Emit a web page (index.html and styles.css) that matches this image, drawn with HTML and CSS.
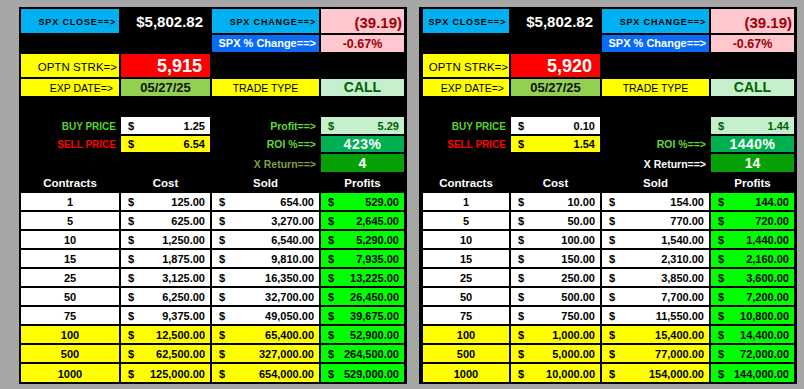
FILE: index.html
```html
<!DOCTYPE html>
<html>
<head>
<meta charset="utf-8">
<link rel="stylesheet" href="styles.css">
</head>
<body>
<div class="page">
  <section class="sheet sheet-a">
    <div class="c lab-cyan">SPX CLOSE==&gt;</div>
    <div class="c close">$5,802.82</div>
    <div class="c lab-cyan">SPX CHANGE==&gt;</div>
    <div class="c pink chg">(39.19)</div>

    <div class="c"></div>
    <div class="c"></div>
    <div class="c lab-blue">SPX % Change==&gt;</div>
    <div class="c pink pct">-0.67%</div>

    <div class="c lab-yellow strk-lab">OPTN STRK=&gt;</div>
    <div class="c strike">5,915</div>
    <div class="c"></div>
    <div class="c"></div>

    <div class="c lab-yellow exp-lab">EXP DATE=&gt;</div>
    <div class="c date">05/27/25</div>
    <div class="c lab-yellow trade">TRADE TYPE</div>
    <div class="c call">CALL</div>

    <div class="c"></div><div class="c"></div><div class="c"></div><div class="c"></div>

    <div class="c txt buy">BUY PRICE</div>
    <div class="c money white"><span>$</span><span>1.25</span></div>
    <div class="c txt gr">Profit==&gt;</div>
    <div class="c money lgreen"><span>$</span><span>5.29</span></div>

    <div class="c txt sell">SELL PRICE</div>
    <div class="c money yellow"><span>$</span><span>6.54</span></div>
    <div class="c txt gr">ROI %==&gt;</div>
    <div class="c roi">423%</div>

    <div class="c"></div>
    <div class="c"></div>
    <div class="c txt olive">X Return==&gt;</div>
    <div class="c xret">4</div>

    <div class="c head">Contracts</div>
    <div class="c head">Cost</div>
    <div class="c head">Sold</div>
    <div class="c head">Profits</div>

    <div class="c qty white">1</div><div class="c money white"><span>$</span><span>125.00</span></div><div class="c money white"><span>$</span><span>654.00</span></div><div class="c money prof"><span>$</span><span>529.00</span></div>
    <div class="c qty white">5</div><div class="c money white"><span>$</span><span>625.00</span></div><div class="c money white"><span>$</span><span>3,270.00</span></div><div class="c money prof"><span>$</span><span>2,645.00</span></div>
    <div class="c qty white">10</div><div class="c money white"><span>$</span><span>1,250.00</span></div><div class="c money white"><span>$</span><span>6,540.00</span></div><div class="c money prof"><span>$</span><span>5,290.00</span></div>
    <div class="c qty white">15</div><div class="c money white"><span>$</span><span>1,875.00</span></div><div class="c money white"><span>$</span><span>9,810.00</span></div><div class="c money prof"><span>$</span><span>7,935.00</span></div>
    <div class="c qty white">25</div><div class="c money white"><span>$</span><span>3,125.00</span></div><div class="c money white"><span>$</span><span>16,350.00</span></div><div class="c money prof"><span>$</span><span>13,225.00</span></div>
    <div class="c qty white">50</div><div class="c money white"><span>$</span><span>6,250.00</span></div><div class="c money white"><span>$</span><span>32,700.00</span></div><div class="c money prof"><span>$</span><span>26,450.00</span></div>
    <div class="c qty white">75</div><div class="c money white"><span>$</span><span>9,375.00</span></div><div class="c money white"><span>$</span><span>49,050.00</span></div><div class="c money prof"><span>$</span><span>39,675.00</span></div>
    <div class="c qty yellow">100</div><div class="c money yellow"><span>$</span><span>12,500.00</span></div><div class="c money yellow"><span>$</span><span>65,400.00</span></div><div class="c money prof"><span>$</span><span>52,900.00</span></div>
    <div class="c qty yellow">500</div><div class="c money yellow"><span>$</span><span>62,500.00</span></div><div class="c money yellow"><span>$</span><span>327,000.00</span></div><div class="c money prof"><span>$</span><span>264,500.00</span></div>
    <div class="c qty yellow">1000</div><div class="c money yellow"><span>$</span><span>125,000.00</span></div><div class="c money yellow"><span>$</span><span>654,000.00</span></div><div class="c money prof"><span>$</span><span>529,000.00</span></div>
  </section>

  <section class="sheet sheet-b">
    <div class="c lab-cyan">SPX CLOSE==&gt;</div>
    <div class="c close">$5,802.82</div>
    <div class="c lab-cyan">SPX CHANGE==&gt;</div>
    <div class="c pink chg">(39.19)</div>

    <div class="c"></div>
    <div class="c"></div>
    <div class="c lab-blue">SPX % Change==&gt;</div>
    <div class="c pink pct">-0.67%</div>

    <div class="c lab-yellow strk-lab">OPTN STRK=&gt;</div>
    <div class="c strike">5,920</div>
    <div class="c"></div>
    <div class="c"></div>

    <div class="c lab-yellow exp-lab">EXP DATE=&gt;</div>
    <div class="c date">05/27/25</div>
    <div class="c lab-yellow trade">TRADE TYPE</div>
    <div class="c call">CALL</div>

    <div class="c"></div><div class="c"></div><div class="c"></div><div class="c"></div>

    <div class="c txt buy">BUY PRICE</div>
    <div class="c money white"><span>$</span><span>0.10</span></div>
    <div class="c"></div>
    <div class="c money lgreen"><span>$</span><span>1.44</span></div>

    <div class="c txt sell">SELL PRICE</div>
    <div class="c money yellow"><span>$</span><span>1.54</span></div>
    <div class="c txt gr">ROI %==&gt;</div>
    <div class="c roi">1440%</div>

    <div class="c"></div>
    <div class="c"></div>
    <div class="c txt wt">X Return==&gt;</div>
    <div class="c xret">14</div>

    <div class="c head">Contracts</div>
    <div class="c head">Cost</div>
    <div class="c head">Sold</div>
    <div class="c head">Profits</div>

    <div class="c qty white">1</div><div class="c money white"><span>$</span><span>10.00</span></div><div class="c money white"><span>$</span><span>154.00</span></div><div class="c money prof"><span>$</span><span>144.00</span></div>
    <div class="c qty white">5</div><div class="c money white"><span>$</span><span>50.00</span></div><div class="c money white"><span>$</span><span>770.00</span></div><div class="c money prof"><span>$</span><span>720.00</span></div>
    <div class="c qty white">10</div><div class="c money white"><span>$</span><span>100.00</span></div><div class="c money white"><span>$</span><span>1,540.00</span></div><div class="c money prof"><span>$</span><span>1,440.00</span></div>
    <div class="c qty white">15</div><div class="c money white"><span>$</span><span>150.00</span></div><div class="c money white"><span>$</span><span>2,310.00</span></div><div class="c money prof"><span>$</span><span>2,160.00</span></div>
    <div class="c qty white">25</div><div class="c money white"><span>$</span><span>250.00</span></div><div class="c money white"><span>$</span><span>3,850.00</span></div><div class="c money prof"><span>$</span><span>3,600.00</span></div>
    <div class="c qty white">50</div><div class="c money white"><span>$</span><span>500.00</span></div><div class="c money white"><span>$</span><span>7,700.00</span></div><div class="c money prof"><span>$</span><span>7,200.00</span></div>
    <div class="c qty white">75</div><div class="c money white"><span>$</span><span>750.00</span></div><div class="c money white"><span>$</span><span>11,550.00</span></div><div class="c money prof"><span>$</span><span>10,800.00</span></div>
    <div class="c qty yellow">100</div><div class="c money yellow"><span>$</span><span>1,000.00</span></div><div class="c money yellow"><span>$</span><span>15,400.00</span></div><div class="c money prof"><span>$</span><span>14,400.00</span></div>
    <div class="c qty yellow">500</div><div class="c money yellow"><span>$</span><span>5,000.00</span></div><div class="c money yellow"><span>$</span><span>77,000.00</span></div><div class="c money prof"><span>$</span><span>72,000.00</span></div>
    <div class="c qty yellow">1000</div><div class="c money yellow"><span>$</span><span>10,000.00</span></div><div class="c money yellow"><span>$</span><span>154,000.00</span></div><div class="c money prof"><span>$</span><span>144,000.00</span></div>
  </section>
</div>
</body>
</html>
```

FILE: styles.css
```css
html, body {
  margin: 0;
  padding: 0;
}
body {
  background: #a6a6a6;
  font-family: "Liberation Sans", Arial, sans-serif;
  width: 804px;
  height: 389px;
  overflow: hidden;
}
.page {
  display: flex;
  gap: 12px;
  padding: 7px 0 0 19px;
}
.sheet {
  display: grid;
  background: #000;
  column-gap: 2px;
  row-gap: 2px;
  padding: 2px 3px 2px 2px;
  grid-template-rows: 24px 17px 23px 17px 17px 17px 16px 18px 17px repeat(9, 17px) 18px;
}
.sheet-a {
  grid-template-columns: 98px 89px 107px 83px;
}
.sheet-b {
  grid-template-columns: 86px 89px 107px 83px;
  padding-left: 4px;
}
.c {
  display: flex;
  align-items: flex-end;
  justify-content: flex-end;
  padding: 0 3px 1px 3px;
  font-weight: bold;
  font-size: 11px;
  line-height: 13px;
  color: #000;
  white-space: nowrap;
  min-height: 0;
}
.lab-cyan {
  background: #00b0f0;
  font-size: 9px;
  letter-spacing: 0.85px;
  padding-bottom: 4px;
}
.close {
  color: #fff;
  font-size: 15px;
  line-height: 17px;
  padding-right: 7px;
  padding-bottom: 3px;
}
.pink {
  background: #ffc7ce;
  color: #9c0006;
}
.chg {
  font-size: 15px;
  line-height: 17px;
  padding-right: 2px;
  padding-bottom: 2px;
}
.pct {
  justify-content: center;
  font-size: 12.5px;
  line-height: 14px;
  padding-bottom: 1px;
}
.lab-blue {
  background: #0a6cf5;
  color: #fff;
  font-size: 11px;
  padding-bottom: 2px;
}
.lab-yellow {
  background: #ffff00;
  font-weight: normal;
}
.strk-lab {
  font-size: 11.5px;
  padding-right: 2px;
  padding-bottom: 3px;
}
.exp-lab {
  font-size: 10.5px;
  padding-right: 6px;
  padding-bottom: 1px;
}
.sheet-b .exp-lab {
  padding-right: 5px;
}
.sheet-b .strk-lab {
  padding-right: 1px;
}
.strike {
  background: #ff0000;
  color: #fff;
  font-size: 18px;
  line-height: 20px;
  padding-right: 8px;
  padding-bottom: 1px;
}
.date {
  background: #92d050;
  color: #111;
  justify-content: center;
  font-size: 13px;
  line-height: 15px;
  padding-bottom: 1px;
}
.trade {
  justify-content: center;
  font-size: 10.5px;
  padding-bottom: 1px;
}
.call {
  background: #c6efce;
  color: #006100;
  justify-content: center;
  font-size: 14px;
  line-height: 16px;
  padding-bottom: 1px;
}
.txt {
  font-size: 10.5px;
}
.buy {
  color: #55d32b;
  font-size: 10px;
}
.sell {
  color: #ff0000;
  font-size: 10px;
}
.gr {
  color: #62d934;
}
.olive {
  color: #7f9f3f;
}
.wt {
  color: #fff;
}
.money {
  justify-content: space-between;
  padding: 0 5px 1px 7px;
}
.white {
  background: #fff;
}
.yellow {
  background: #ffff00;
}
.lgreen {
  background: #c6efce;
  color: #006100;
}
.prof {
  background: #00ff00;
}
.roi {
  background: #00b050;
  color: #fff;
  justify-content: center;
  align-items: center;
  font-size: 14px;
  line-height: 16px;
  letter-spacing: 0.5px;
  padding-bottom: 0;
}
.xret {
  background: #07a007;
  color: #fff;
  justify-content: center;
  font-size: 14px;
  line-height: 16px;
}
.head {
  color: #fff;
  justify-content: center;
  font-size: 11.5px;
}
.qty {
  justify-content: center;
}
```
